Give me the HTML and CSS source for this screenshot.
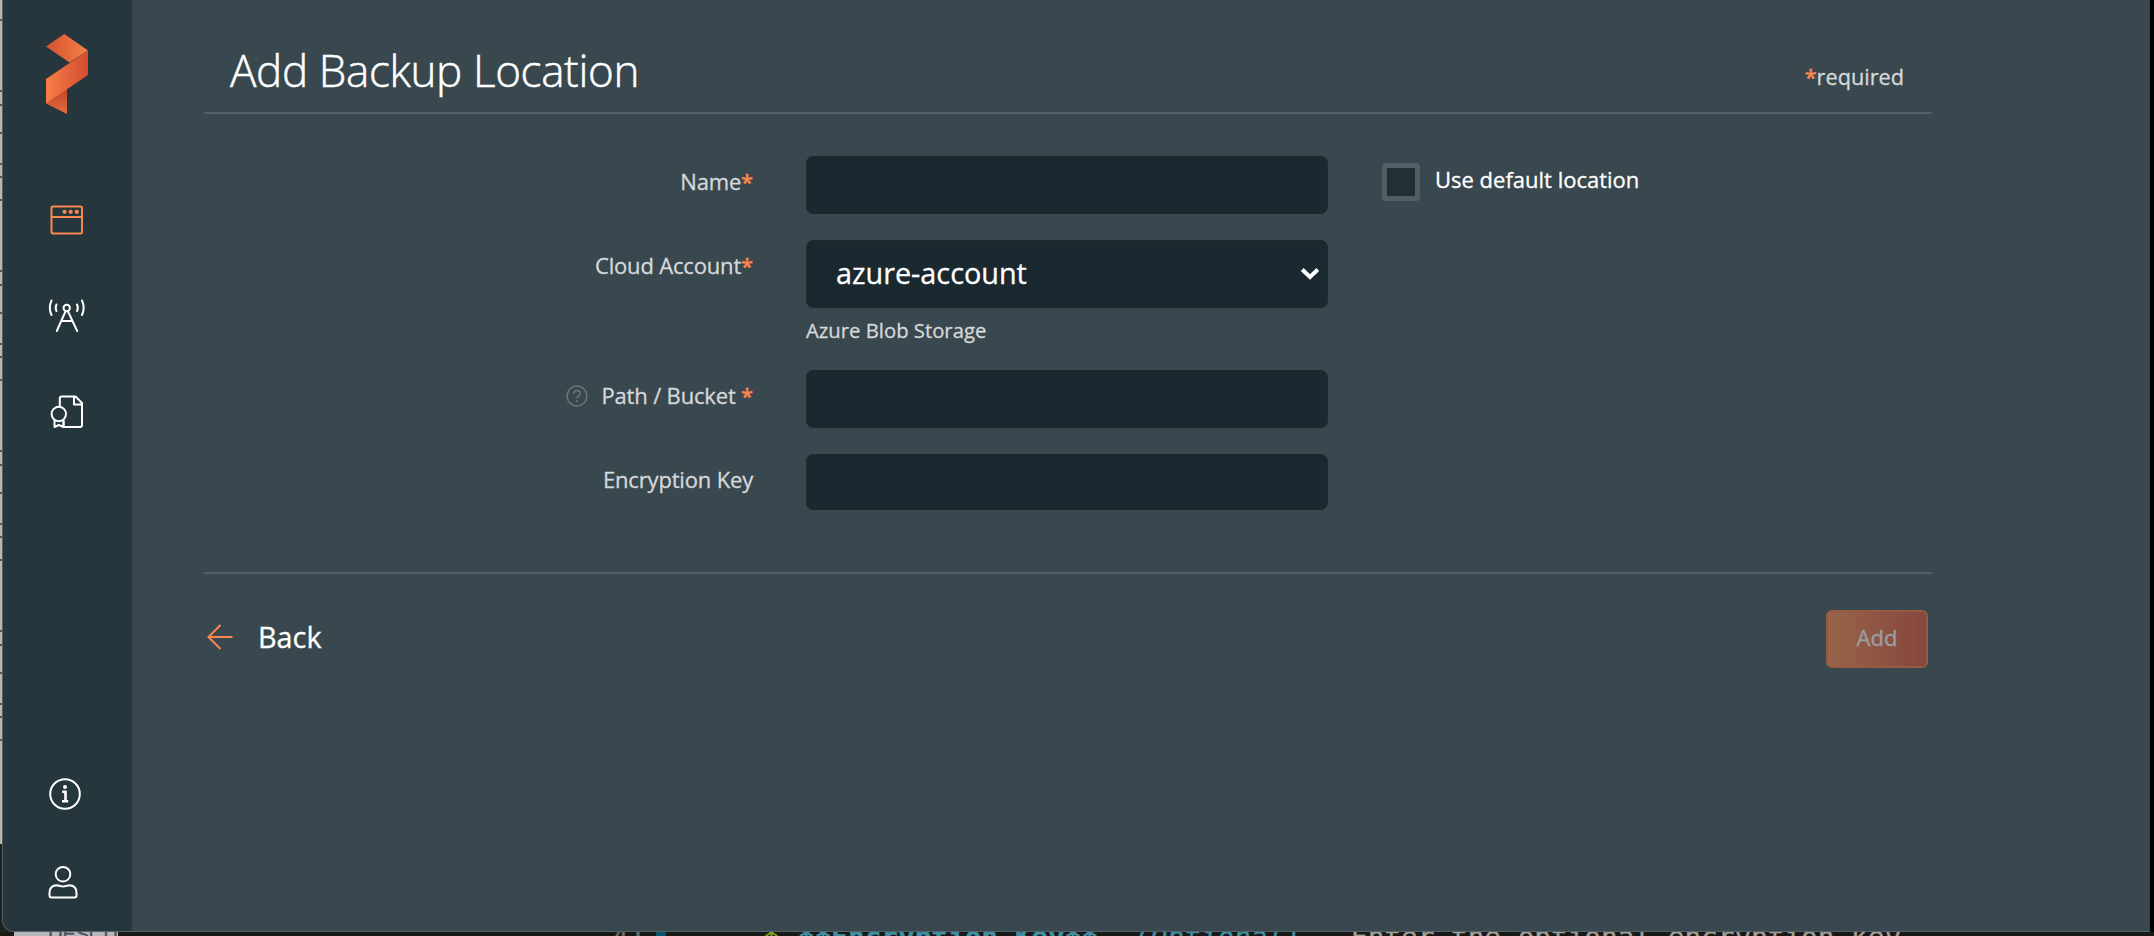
FILE: index.html
```html
<!DOCTYPE html>
<html lang="en">
<head>
<meta charset="utf-8">
<title>Add Backup Location</title>
<link rel="stylesheet" href="styles.css">
</head>
<body>
<div class="desktop">
  <div class="ticks"></div>
  <div class="editor">
    <span class="ed-thumb">DESCU</span>
    <span class="ed-num">41</span>
    <span class="ed-caret"></span>
    <span class="ed-bullet">*</span>
    <span class="ed-key">**Encryption Key**</span>
    <span class="ed-opt">(Optional)</span>
    <span class="ed-body">Enter the optional encryption key</span>
  </div>
</div>
<div class="window">
  <nav class="sidebar">
    <svg class="logo" viewBox="0 0 42 80">
      <defs>
        <linearGradient id="g1"><stop offset="0" stop-color="#d65032"/><stop offset="1" stop-color="#f48248"/></linearGradient>
        <linearGradient id="g2"><stop offset="0" stop-color="#f67e47"/><stop offset="1" stop-color="#d24d30"/></linearGradient>
        <linearGradient id="g3" x1="0" y1="0" x2="0" y2="1"><stop offset="0" stop-color="#c2432c"/><stop offset="1" stop-color="#e46b3b"/></linearGradient>
      </defs>
      <path fill="url(#g1)" d="M0 12.500L18.300 0L42 16.500L23.500 28.500Z"/>
      <path fill="url(#g3)" d="M0 69.500L21 54V80Z"/>
      <path fill="url(#g2)" d="M42 16.500V41L0 69.500V45Z"/>
    </svg>
    <svg class="icon icon-apps" viewBox="0 0 40 40">
      <rect x="4.500" y="6.500" width="30.500" height="27" rx="1.800"/>
      <path d="M4.500 17H35"/>
      <g class="dots"><circle cx="17.600" cy="11.800" r="2.100"/><circle cx="23.700" cy="11.800" r="2.100"/><circle cx="29.800" cy="11.800" r="2.100"/></g>
    </svg>
    <svg class="icon icon-tower" viewBox="0 0 40 40">
      <circle cx="19.700" cy="12" r="3.200"/>
      <path d="M18.500 15.300L9.800 35M20.900 15.300L30.200 35M14.600 25H25M4.500 4.500Q1.200 12 4.500 19M35 4.500Q38.300 12 35 19M9.500 8.500Q7.900 12 9.500 15M30 8.500Q31.600 12 30 15"/>
    </svg>
    <svg class="icon icon-license" viewBox="0 0 40 40">
      <path d="M12.800 14.500V6.500Q12.800 4.500 14.800 4.500H28.500L35 11V33Q35 35 33 35H16.500V29M27 4.500V12.500H35"/>
      <circle cx="11.800" cy="22" r="7.200"/>
      <path d="M7.500 28.500V35L11.800 33L16.500 35V28.500"/>
    </svg>
    <span class="spacer"></span>
    <svg class="icon icon-info" viewBox="0 0 40 40">
      <circle cx="20" cy="20" r="14.800"/>
      <circle class="solid" cx="20" cy="13" r="2"/>
      <path class="thick" d="M17.200 17.700H20.500V27.200M17 27.300H23.200"/>
    </svg>
    <svg class="icon icon-user" viewBox="0 0 40 40">
      <circle cx="20" cy="12.200" r="7.300"/>
      <path d="M6.500 33.500V31Q6.500 23.300 14 23.300Q20 25.500 26 23.300Q33.500 23.300 33.500 31V33.500Q33.500 35.500 31.500 35.500H8.500Q6.500 35.500 6.500 33.500Z"/>
    </svg>
  </nav>
  <main class="content">
    <header class="head">
      <h1 class="title">Add Backup Location</h1>
      <span class="required"><b class="star">*</b>required</span>
    </header>
    <form class="form">
      <div class="row row-name">
        <label class="label">Name<b class="star">*</b></label>
        <input class="field" type="text">
        <label class="default"><span class="check"></span><span class="default-text">Use default location</span></label>
      </div>
      <div class="row row-cloud">
        <label class="label">Cloud Account<b class="star">*</b></label>
        <div class="stack">
          <div class="select"><span>azure-account</span>
            <svg class="chevron" viewBox="0 0 20 14"><path d="M2.200 2.500L10 10L17.800 2.500"/></svg>
          </div>
          <p class="hint">Azure Blob Storage</p>
        </div>
      </div>
      <div class="row row-path">
        <label class="label">
          <svg class="help" viewBox="0 0 22 22"><circle cx="11" cy="11" r="9.900"/><path d="M7.800 8.600Q8 5.600 11 5.600T14.200 8.400Q14.200 10 12.500 11T11 13.300"/><circle class="help-dot" cx="11" cy="16.100" r="1.100"/></svg>Path / Bucket <b class="star">*</b></label>
        <input class="field" type="text">
      </div>
      <div class="row row-enc">
        <label class="label">Encryption Key</label>
        <input class="field field-short" type="text">
      </div>
    </form>
    <footer class="foot">
      <a class="back"><svg class="arrow" viewBox="0 0 28 28"><path d="M26.500 14H2.500M14.500 2L2.500 14L14.500 26"/></svg>Back</a>
      <button class="add" type="button">Add</button>
    </footer>
  </main>
</div>
</body>
</html>
```
FILE: styles.css
```css
* { box-sizing: border-box; }
body { margin: 0; width: 2154px; height: 936px; overflow: hidden; position: relative; background: #000; font-family: "Open Sans", "Noto Sans", sans-serif; color: #d5d8da; -webkit-text-stroke: 0.300px currentColor; }

.desktop { position: absolute; inset: 0; background: linear-gradient(#beb7a6 844px, #1c2420 844px) 0 0 / 20px 936px no-repeat; }
.ticks { position: absolute; left: 0; top: 19px; width: 3px; height: 725px;
  background: linear-gradient(#465a63 2px, transparent 2px 71px, #465a63 71px 73px, transparent 73px 85px, #465a63 85px 87px, transparent 87px 113px, #465a63 113px 115px, transparent 115px 144px, #465a63 144px 146px, transparent 146px 157px, #465a63 157px 159px, transparent 159px) 0 0 / 3px 180px; }
.editor { position: absolute; left: 0; right: 0; top: 932px; height: 4px; overflow: hidden; background: #191917; font: 27.700px/32px "DejaVu Sans Mono", monospace; white-space: pre; }
.editor span { position: absolute; top: -10px; }
.editor .ed-thumb { left: 14px; top: 0; width: 104px; height: 4px; padding-left: 34px; background: #b6b7ba; color: #4c4f58; font: 20px/4px "Liberation Sans", sans-serif; overflow: hidden; }
.editor .ed-num { left: 612px; color: #706b62; }
.editor .ed-caret { left: 656px; top: 0; width: 10px; height: 4px; background: #07566c; }
.editor .ed-bullet { left: 763px; color: #7da51f; }
.editor .ed-key { left: 798px; color: #3f8fa0; font-weight: bold; }
.editor .ed-opt { left: 1134px; color: #3f8fa0; font-style: italic; }
.editor .ed-body { left: 1351px; color: #a19e96; }

.window { position: absolute; left: 2px; top: 0; width: 2148px; height: 932px; display: flex; overflow: hidden; background: #39474e; border: solid #52616a; border-width: 0 0 1px 1px; border-radius: 0 0 0 12px; }
.sidebar { width: 129px; flex: none; background: #26363d; display: flex; flex-direction: column; align-items: flex-start; }
.logo { width: 42px; height: 80px; margin: 34px 0 0 43px; }
.icon { width: 40px; height: 40px; fill: none; stroke: #fff; stroke-width: 2; stroke-linecap: round; stroke-linejoin: round; }
.icon-apps { margin: 86px 0 0 44px; stroke: #fb864f; }
.dots { fill: #fb864f; stroke: none; }
.icon-tower { margin: 56px 0 0 44px; }
.icon-license { margin: 56px 0 0 44px; }
.spacer { flex: 1; }
.icon-info { margin: 0 0 48px 42px; }
.icon-user { margin: 0 0 29px 40px; }
.solid { fill: #fff; stroke: none; }
.thick { stroke-width: 2.600; stroke-linecap: butt; stroke-linejoin: miter; }

.content { flex: 1; padding: 0 218px 0 72px; }
.head { height: 114px; border-bottom: 2px solid #526067; padding: 0 28px 0 26px; display: flex; justify-content: space-between; }
.title { margin: 40px 0 0; font-size: 44px; line-height: 60px; font-weight: 300; letter-spacing: -0.360px; color: #fff; -webkit-text-stroke-width: 0.500px; }
.required { font-size: 21.700px; line-height: 30px; margin-top: 62px; }
.star { color: #fb864f; font-weight: 600; }
.form { height: 460px; border-bottom: 2px solid #526067; padding-top: 42px; }
.row { display: flex; align-items: flex-start; margin-bottom: 26px; }
.label { width: 549px; margin-right: 53px; padding-top: 10px; display: flex; justify-content: flex-end; white-space: pre; font-size: 22px; letter-spacing: -0.170px; line-height: 30px; }
.field { width: 522px; height: 58px; border: 1px solid #1d2b31; border-radius: 7px; background: #1a282f; padding: 0 28px; color: #fff; }
.field-short { height: 56px; }
.default { display: flex; margin: 7px 0 0 54px; color: #fff; font-size: 22px; line-height: 30px; }
.check { width: 38px; height: 38px; border: 5px solid #505e65; border-radius: 4px; background: #242f35; }
.default-text { margin: 1px 0 0 15px; }
.stack { width: 522px; }
.select { height: 68px; border-radius: 7px; border: 1px solid #1d2b31; background: #1a282f; padding: 0 7px 0 29px; display: flex; align-items: center; justify-content: space-between; color: #fff; font-size: 28.800px; }
.select span { line-height: 40px; margin-top: -2px; }
.chevron { width: 20px; height: 14px; fill: none; stroke: #fff; stroke-width: 4; }
.hint { margin: 9px 0 0; font-size: 20.300px; line-height: 27px; }
.help { width: 22px; height: 22px; margin: 5px 13px 0 0; fill: none; stroke: #69767c; stroke-width: 1.500; }
.help-dot { fill: #69767c; stroke: none; }
.foot { padding: 36px 4px 0 2px; display: flex; justify-content: space-between; }
.back { display: flex; font-size: 28.800px; line-height: 40px; color: #fff; margin-top: 7px; }
.arrow { width: 28px; height: 28px; margin: 6px 24px 0 0; fill: none; stroke: #fb864f; stroke-width: 2; }
.add { width: 102px; height: 58px; border: 2px solid #955c43; border-radius: 6px; padding: 0 0 4px; background: linear-gradient(90deg, #97644a, #87463e); color: #9a9fa2; font: 22px "Open Sans", sans-serif; }
```
